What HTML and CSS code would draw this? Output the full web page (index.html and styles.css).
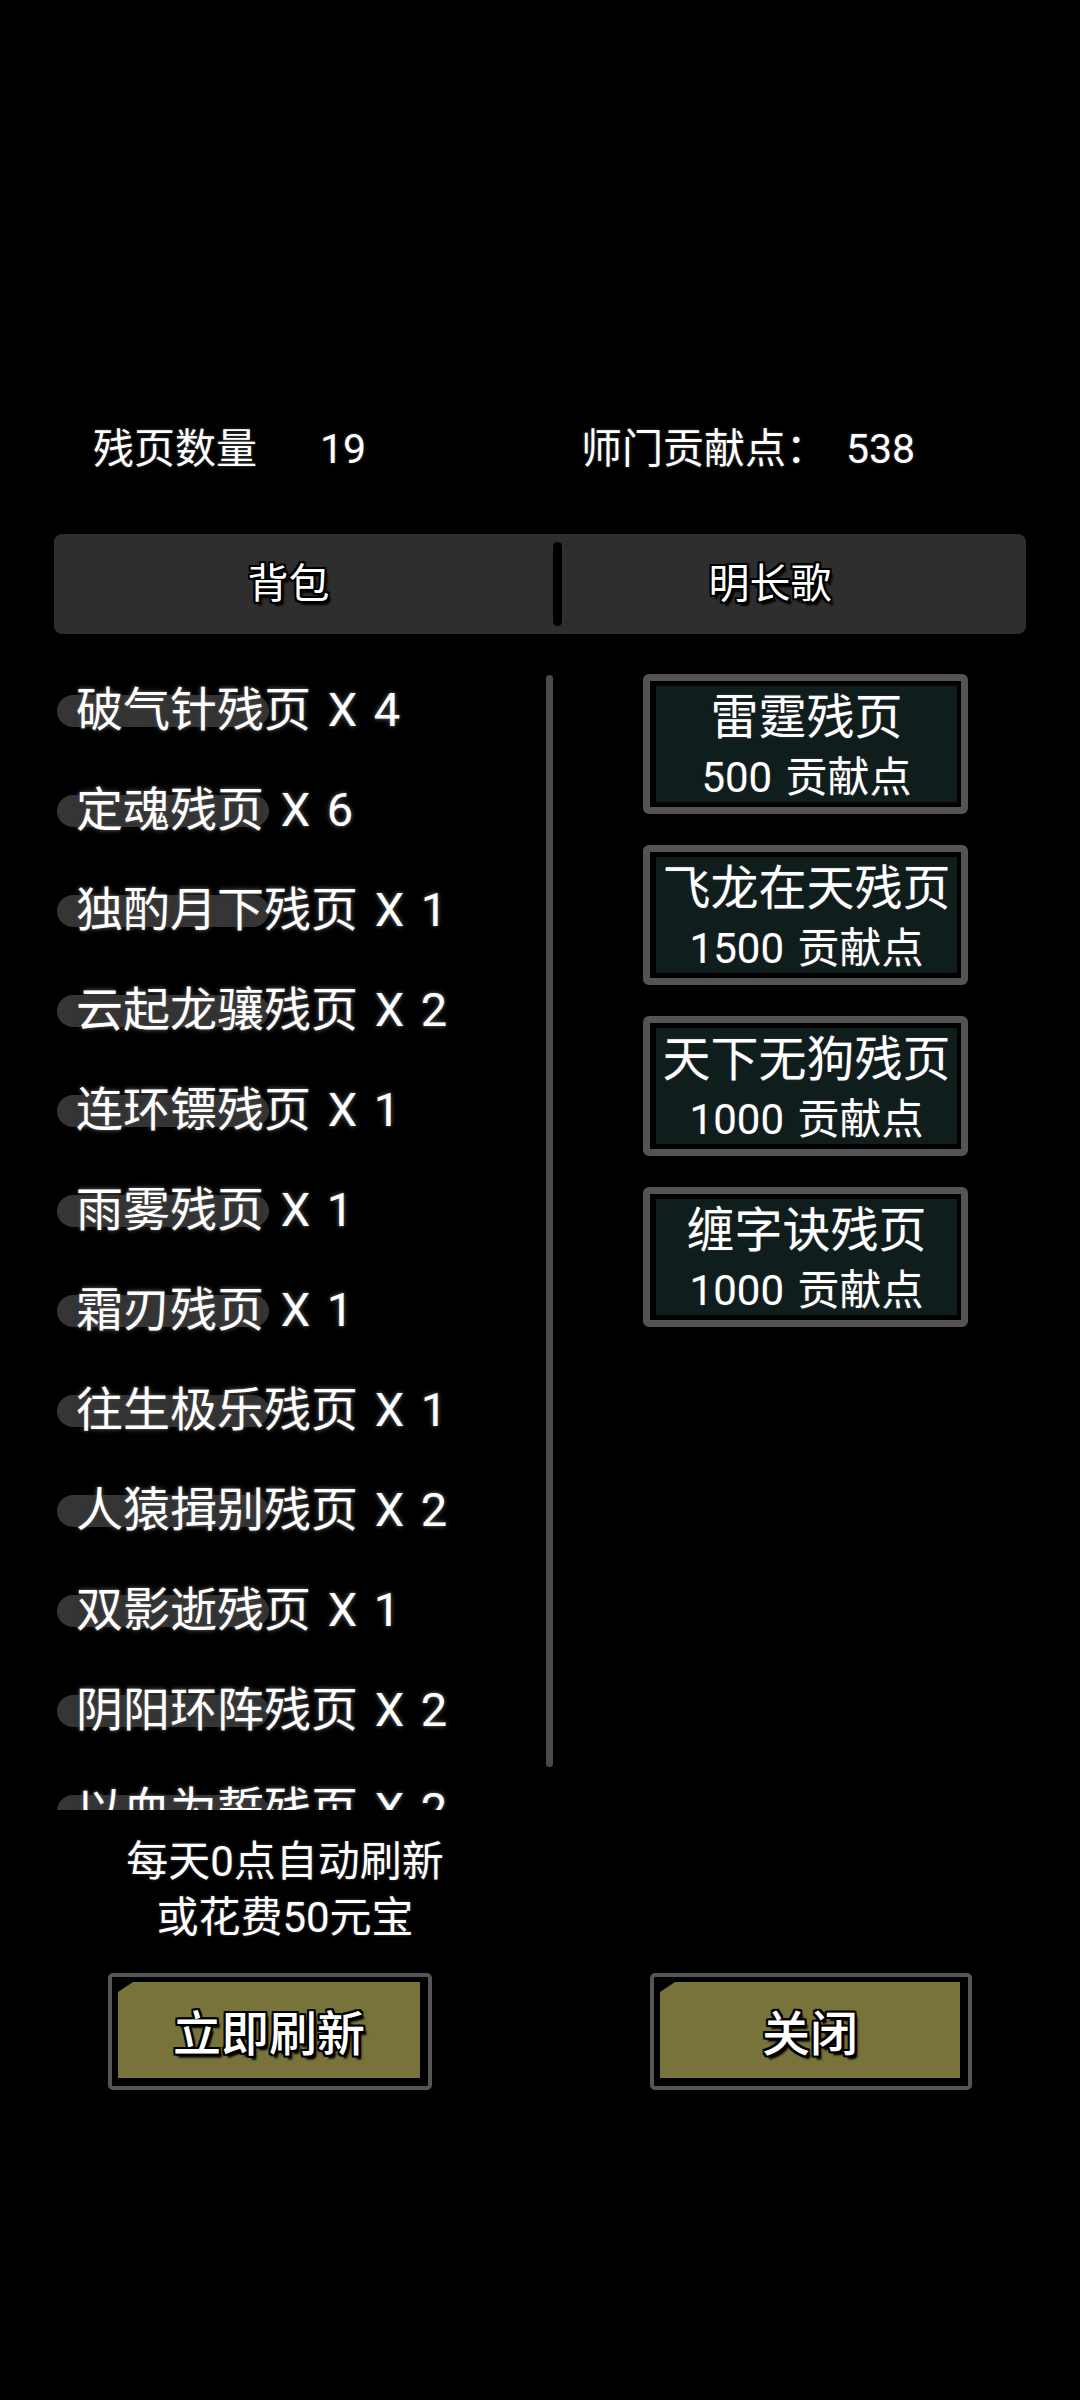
FILE: index.html
```html
<!DOCTYPE html>
<html lang="zh-CN">
<head>
<meta charset="utf-8">
<title>残页兑换</title>
<link rel="stylesheet" href="styles.css">
</head>
<body>
<div class="screen">
  <div class="header">
    <div class="stat stat-left"><span class="stat-label">残页数量</span><span class="stat-value">19</span></div>
    <div class="stat stat-right"><span class="stat-label">师门贡献点：</span><span class="stat-value">538</span></div>
  </div>

  <div class="tabs">
    <div class="tab tab-left">背包</div>
    <div class="tab-divider"></div>
    <div class="tab tab-right">明长歌</div>
  </div>

  <div class="content">
    <div class="list-wrap">
      <ul class="list">
        <li class="item"><span class="item-text">破气针残页 X 4</span></li>
        <li class="item"><span class="item-text">定魂残页 X 6</span></li>
        <li class="item"><span class="item-text">独酌月下残页 X 1</span></li>
        <li class="item"><span class="item-text">云起龙骧残页 X 2</span></li>
        <li class="item"><span class="item-text">连环镖残页 X 1</span></li>
        <li class="item"><span class="item-text">雨雾残页 X 1</span></li>
        <li class="item"><span class="item-text">霜刃残页 X 1</span></li>
        <li class="item"><span class="item-text">往生极乐残页 X 1</span></li>
        <li class="item"><span class="item-text">人猿揖别残页 X 2</span></li>
        <li class="item"><span class="item-text">双影逝残页 X 1</span></li>
        <li class="item"><span class="item-text">阴阳环阵残页 X 2</span></li>
        <li class="item"><span class="item-text">以血为誓残页 X 2</span></li>
      </ul>
      <div class="scrollbar"></div>
    </div>

    <div class="shop">
      <div class="card"><div class="card-inner"><div class="card-title">雷霆残页</div><div class="card-price">500 贡献点</div></div></div>
      <div class="card"><div class="card-inner"><div class="card-title">飞龙在天残页</div><div class="card-price">1500 贡献点</div></div></div>
      <div class="card"><div class="card-inner"><div class="card-title">天下无狗残页</div><div class="card-price">1000 贡献点</div></div></div>
      <div class="card"><div class="card-inner"><div class="card-title">缠字诀残页</div><div class="card-price">1000 贡献点</div></div></div>
    </div>
  </div>

  <div class="notice">
    <div class="notice-line">每天0点自动刷新</div>
    <div class="notice-line">或花费50元宝</div>
  </div>

  <div class="buttons">
    <div class="btn btn-refresh"><div class="btn-face">立即刷新</div></div>
    <div class="btn btn-close"><div class="btn-face">关闭</div></div>
  </div>
</div>
</body>
</html>
```

FILE: styles.css
```css
html, body {
  margin: 0;
  padding: 0;
  background: #000;
}

body {
  width: 1080px;
  height: 2400px;
  overflow: hidden;
  font-family: Roboto, "Noto Sans CJK SC", "Noto Sans", sans-serif;
  color: #fff;
}

.screen {
  width: 1080px;
  height: 2400px;
  padding-top: 419px;
  box-sizing: border-box;
}

/* header */
.header {
  display: flex;
  height: 60px;
  line-height: 60px;
  font-size: 41px;
  text-shadow: 0 0 3px rgba(110, 110, 110, 0.7);
}

.stat {
  display: flex;
}

.stat-left {
  margin-left: 93px;
  width: 488px;
}

.stat-left .stat-label {
  width: 227px;
}

.stat-right .stat-label {
  width: 265px;
}

/* tabs */
.tabs {
  margin: 55px 54px 0;
  height: 100px;
  background: #2e2e2e;
  border-radius: 8px;
  display: flex;
  align-items: center;
}

.tab {
  box-sizing: border-box;
  text-align: center;
  font-size: 41px;
  line-height: 60px;
  color: #fff;
  text-shadow: -2px 0 0 #000, 2px 0 0 #000, 0 -2px 0 #000, 0 2px 0 #000,
    -2px -2px 0 #000, 2px 2px 0 #000, -2px 2px 0 #000, 2px -2px 0 #000,
    3px 4px 2px #000;
}

.tab-left {
  width: 499px;
  padding-right: 30px;
}

.tab-right {
  flex: 1;
  padding-right: 48px;
}

.tab-divider {
  width: 9px;
  height: 84px;
  background: #000;
  border-radius: 5px;
}

/* content */
.content {
  display: flex;
  margin-top: 26px;
}

.list-wrap {
  position: relative;
  margin-left: 54px;
  width: 500px;
  height: 1150px;
  overflow: hidden;
}

.list {
  list-style: none;
  margin: 0;
  padding: 0;
}

.item {
  position: relative;
  height: 100px;
  display: flex;
  align-items: center;
  padding-left: 22px;
}

.item::before {
  content: "";
  position: absolute;
  left: 3px;
  top: 35px;
  width: 212px;
  height: 32px;
  border-radius: 16px;
  background: #353535;
}

.item-text {
  position: relative;
  font-size: 47px;
  line-height: 60px;
  white-space: nowrap;
  word-spacing: 5px;
  text-shadow: 0 0 2px #555, 0 0 4px #444, 0 0 6px #333;
}

.scrollbar {
  position: absolute;
  left: 492px;
  top: 15px;
  width: 7px;
  height: 1092px;
  border-radius: 4px;
  background: #4a4a4a;
}

/* shop cards */
.shop {
  margin-left: 89px;
  padding-top: 14px;
  display: flex;
  flex-direction: column;
  gap: 31px;
}

.card {
  width: 325px;
  height: 140px;
  box-sizing: border-box;
  border: 7px solid #545454;
  border-radius: 6px;
  background: #000;
  padding: 5px 4px 5px 6px;
}

.card-inner {
  height: 100%;
  background: #0f1d1c;
  text-align: center;
  padding-top: 2px;
  box-sizing: border-box;
}

.card-title {
  font-size: 48px;
  line-height: 60px;
  white-space: nowrap;
  text-shadow: 0 0 2px #444;
}

.card-price {
  font-size: 42px;
  line-height: 60px;
  white-space: nowrap;
  word-spacing: 3px;
  text-shadow: 0 0 2px #444;
}

/* notice */
.notice {
  width: 570px;
  margin-top: 24px;
  text-align: center;
  font-size: 42px;
  line-height: 56px;
  text-shadow: 0 0 3px rgba(110, 110, 110, 0.7);
}

/* buttons */
.buttons {
  display: flex;
  margin-top: 27px;
  margin-left: 108px;
  gap: 218px;
}

.btn {
  width: 324px;
  height: 117px;
  box-sizing: border-box;
  border: 4px solid #555;
  border-radius: 5px;
  background: #000;
  padding: 5px 8px 8px 6px;
}

.btn-close {
  width: 322px;
}

.btn-face {
  height: 100%;
  background: #77733b;
  clip-path: polygon(15px 0, 100% 0, 100% 100%, 0 100%, 0 10px);
  display: flex;
  align-items: center;
  justify-content: center;
  font-size: 48px;
  font-weight: 500;
  color: #fff;
  text-shadow: -2px 0 0 #000, 2px 0 0 #000, 0 -2px 0 #000, 0 2px 0 #000,
    -2px -2px 0 #000, 2px 2px 0 #000, -2px 2px 0 #000, 2px -2px 0 #000,
    3px 4px 2px #000;
}
```
